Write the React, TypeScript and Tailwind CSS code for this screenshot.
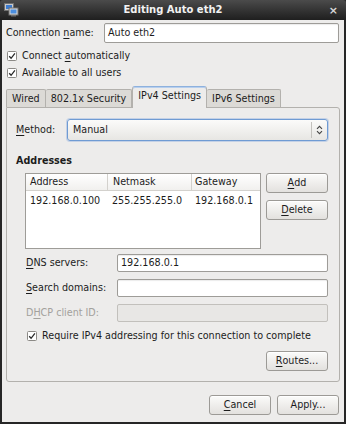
import React from "react";

function Check({ className = "" }: { className?: string }) {
  return (
    <svg width="10" height="10" viewBox="0 0 10 10" className={className}>
      <rect x="0.5" y="0.5" width="9" height="9" rx="1" fill="#fff" stroke="#8c8a86" />
      <path d="M2.2 5.2 L4.1 7.3 L7.9 2.4" fill="none" stroke="#2a2a2a" strokeWidth="1.3" />
    </svg>
  );
}

function U({ children }: { children: React.ReactNode }) {
  return <span className="underline decoration-1 underline-offset-[1.5px]">{children}</span>;
}

function Button({ children, className = "" }: { children: React.ReactNode; className?: string }) {
  return (
    <div
      className={
        "flex items-center justify-center rounded-[3px] border border-[#9c9a96] bg-gradient-to-b from-[#fbfbfa] to-[#e3e1de] shadow-[inset_0_1px_0_#fff] " +
        className
      }
    >
      {children}
    </div>
  );
}

function Input({ value, className = "", disabled = false }: { value?: string; className?: string; disabled?: boolean }) {
  return (
    <div
      className={
        "flex items-center rounded-[2px] border px-[3px] " +
        (disabled ? "border-[#c2c0bc] bg-[#e8e7e5]" : "border-[#9e9c98] bg-white shadow-[inset_0_1px_1px_rgba(0,0,0,0.08)]") +
        " " +
        className
      }
    >
      {value}
    </div>
  );
}

export default function App() {
  return (
    <div className="w-[346px] h-[424px] bg-[#262626] flex flex-col font-['DejaVu_Sans',sans-serif] text-[9.6px] leading-none text-[#1c1c1c] overflow-hidden">
      {/* Title bar */}
      <div className="relative h-[20px] flex items-center justify-center bg-gradient-to-b from-[#4b4b4b] to-[#1f1f1f] rounded-t-[3px]">
        <svg width="15" height="14" viewBox="0 0 15 14" className="absolute left-[4px] top-[3px]">
          <rect x="0.5" y="0.5" width="9" height="7" fill="#c8c8c8" stroke="#707070" />
          <rect x="2" y="2" width="6" height="4" fill="#3b7bd0" />
          <rect x="5" y="5" width="9" height="7" fill="#d8d8d8" stroke="#707070" />
          <rect x="6.5" y="6.5" width="6" height="4" fill="#4a8ee0" />
          <rect x="7" y="12" width="5" height="1.5" fill="#707070" />
        </svg>
        <span className="font-bold text-[10px] text-[#f2f2f2]">Editing Auto eth2</span>
        <span className="absolute right-[8px] top-[5px] text-[#d8d8d8] font-bold text-[11px]">×</span>
      </div>

      {/* Body */}
      <div className="flex-1 mx-[2px] mb-[2px] bg-[#edeceb] flex flex-col">
        {/* Connection name */}
        <div className="mt-[3px] h-[20px] flex items-center pl-[4px]">
          <span className="w-[98px]">
            Connection <U>n</U>ame:
          </span>
          <Input value="Auto eth2" className="w-[235px] h-[20px]" />
        </div>

        {/* Checkboxes */}
        <div className="mt-[4px] flex flex-col pl-[5px]">
          <div className="h-[17px] flex items-center gap-[5px]">
            <Check />
            <span>
              Connect <U>a</U>utomatically
            </span>
          </div>
          <div className="h-[17px] flex items-center gap-[5px]">
            <Check />
            <span>Available to all users</span>
          </div>
        </div>

        {/* Tabs */}
        <div className="mt-[5px] h-[21px] flex items-end pl-[4px] relative z-10">
          <div className="h-[18px] px-[5px] flex items-center border border-b-0 border-[#b3b1ad] bg-[#dcdad6] rounded-t-[2px]">
            Wired
          </div>
          <div className="h-[18px] px-[5px] flex items-center border border-b-0 border-l-0 border-[#b3b1ad] bg-[#dcdad6] rounded-t-[2px]">
            802.1x Security
          </div>
          <div className="h-[22px] px-[5px] pb-[3px] flex items-center border border-b-0 border-[#b3b1ad] border-t-[#8eb1dd] bg-[#edeceb] rounded-t-[3px] -mb-[1px] shadow-[inset_0_1px_0_#b7cfee]">
            IPv4 Settings
          </div>
          <div className="h-[18px] px-[5px] flex items-center border border-b-0 border-l-0 border-[#b3b1ad] bg-[#dcdad6] rounded-t-[2px]">
            IPv6 Settings
          </div>
        </div>

        {/* Panel */}
        <div className="mx-[4px] h-[275px] border border-[#b3b1ad] rounded-b-[3px] rounded-tr-[3px] flex flex-col">
          {/* Method */}
          <div className="mt-[11px] pl-[9px] flex items-center">
            <span className="w-[51px]">
              <U>M</U>ethod:
            </span>
            <div className="w-[261px] h-[22px] rounded-[3px] border border-[#6f9bd3] bg-gradient-to-b from-[#fbfbfa] to-[#e7e6e3] flex items-center shadow-[0_0_0_1px_rgba(120,160,220,0.35)]">
              <span className="flex-1 pl-[5px]">Manual</span>
              <div className="w-[16px] h-[16px] border-l border-[#c3c1bd] flex items-center justify-center">
                <svg width="7" height="10" viewBox="0 0 7 10">
                  <path d="M1 3.8 L3.5 1.3 L6 3.8" fill="none" stroke="#444" strokeWidth="1.1" />
                  <path d="M1 6.2 L3.5 8.7 L6 6.2" fill="none" stroke="#444" strokeWidth="1.1" />
                </svg>
              </div>
            </div>
          </div>

          {/* Addresses */}
          <div className="mt-[14px] pl-[9px] font-bold h-[12px] flex items-center">Addresses</div>

          <div className="mt-[6px] pl-[18px] flex gap-[5px]">
            <div className="w-[236px] h-[76px] border border-[#9e9c98] bg-white flex flex-col">
              <div className="h-[17px] flex border-b border-[#d3d1cd] bg-gradient-to-b from-[#ffffff] to-[#f1f0ee]">
                <div className="w-[82px] pl-[4px] flex items-center border-r border-[#d3d1cd]">Address</div>
                <div className="w-[84px] pl-[5px] flex items-center border-r border-[#d3d1cd]">Netmask</div>
                <div className="flex-1 pl-[3px] flex items-center">Gateway</div>
              </div>
              <div className="h-[19px] flex items-center">
                <div className="w-[82px] pl-[4px]">192.168.0.100</div>
                <div className="w-[84px] pl-[4px]">255.255.255.0</div>
                <div className="flex-1 pl-[3px]">192.168.0.1</div>
              </div>
            </div>
            <div className="flex flex-col gap-[7px]">
              <Button className="w-[62px] h-[20px]">
                <U>A</U>dd
              </Button>
              <Button className="w-[62px] h-[20px]">
                <U>D</U>elete
              </Button>
            </div>
          </div>

          {/* DNS etc */}
          <div className="mt-[5px] pl-[19px] flex flex-col gap-[7px]">
            <div className="flex items-center h-[18px]">
              <span className="w-[91px]">
                <U>D</U>NS servers:
              </span>
              <Input value="192.168.0.1" className="w-[211px] h-[18px]" />
            </div>
            <div className="flex items-center h-[18px]">
              <span className="w-[91px]">
                <U>S</U>earch domains:
              </span>
              <Input className="w-[211px] h-[18px]" />
            </div>
            <div className="flex items-center h-[18px]">
              <span className="w-[91px] text-[#a3a19d]">
                D<U>H</U>CP client ID:
              </span>
              <Input className="w-[211px] h-[18px]" disabled />
            </div>
          </div>

          <div className="mt-[7px] pl-[20px] h-[14px] flex items-center gap-[5px]">
            <Check />
            <span>Require IPv4 addressing for this connection to complete</span>
          </div>

          <div className="mt-[8px] flex justify-end pr-[11px]">
            <Button className="w-[62px] h-[20px]">
              <U>R</U>outes...
            </Button>
          </div>
        </div>

        {/* Bottom buttons */}
        <div className="mt-[13px] flex justify-end gap-[6px] pr-[5px]">
          <Button className="w-[62px] h-[20px]">
            <U>C</U>ancel
          </Button>
          <Button className="w-[62px] h-[20px]">Apply...</Button>
        </div>
      </div>
    </div>
  );
}
